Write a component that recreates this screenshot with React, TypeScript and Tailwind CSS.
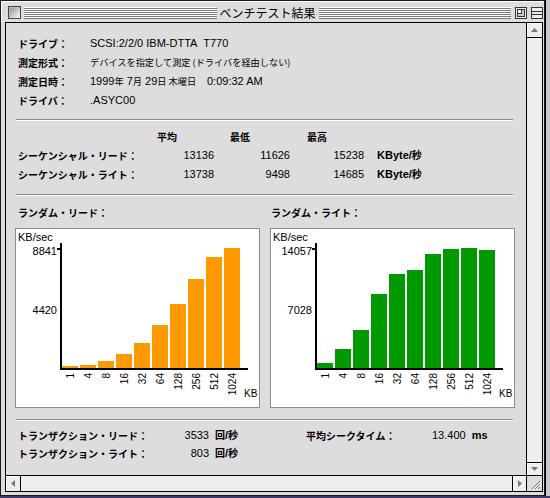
import React from "react";

const jp = "font-['Noto_Sans_CJK_JP',sans-serif]";
const num = "font-['Liberation_Sans','Noto_Sans_CJK_JP',sans-serif]";
const jpValue = "text-[9.2px] font-['Noto_Sans_CJK_JP',sans-serif]";

const sizes = ["1", "4", "8", "16", "32", "64", "128", "256", "512", "1024"];

interface ChartProps {
  color: string;
  heights: number[];
  max: string;
  mid: string;
}

const Chart: React.FC<ChartProps> = ({ color, heights, max, mid }) => (
  <div className="w-[245px] h-[180px] border border-[#8c8c8c] bg-white">
    <svg width={243} height={178} viewBox="1 1 243 178" fontFamily="Liberation Sans, sans-serif">
      <text x={3} y={13} fontSize={11}>
        KB/sec
      </text>
      {heights.map((h, i) => (
        <rect key={i} x={47 + 18 * i} y={140 - h} width={16} height={h} fill={color} />
      ))}
      <rect x={45} y={15} width={2} height={127} fill="#000" />
      <rect x={45} y={140} width={188} height={2} fill="#000" />
      <rect x={42} y={20} width={3} height={2} fill="#000" />
      <text x={42} y={27} fontSize={11} textAnchor="end">
        {max}
      </text>
      <text x={42} y={86} fontSize={11} textAnchor="end">
        {mid}
      </text>
      {sizes.map((s, i) => (
        <text
          key={s}
          transform={`translate(${55 + 18 * i} 145) rotate(-90)`}
          textAnchor="end"
          dy="0.36em"
          fontSize={10}
        >
          {s}
        </text>
      ))}
      <text x={229} y={169} fontSize={10}>
        KB
      </text>
    </svg>
  </div>
);

const Stripes = () => (
  <div className="flex-1 h-[12px] bg-[repeating-linear-gradient(to_bottom,#ffffff_0px,#ffffff_1px,#7a7a7a_1px,#7a7a7a_2px)]" />
);

const Separator = ({ className }: { className: string }) => (
  <div className={`ml-[10px] w-[497px] h-[2px] border-t border-[#8a8a8a] border-b border-b-white ${className}`} />
);

const Arrow = ({ dir }: { dir: "up" | "down" | "left" | "right" }) => {
  const pts = {
    up: "0,4 7,4 3.5,0",
    down: "0,0 7,0 3.5,4",
    left: "4,0 4,7 0,3.5",
    right: "0,0 0,7 4,3.5",
  }[dir];
  const vertical = dir === "up" || dir === "down";
  return (
    <svg width={vertical ? 7 : 4} height={vertical ? 4 : 7}>
      <polygon points={pts} fill="#777" />
    </svg>
  );
};

const InfoRow = ({ label, children }: { label: string; children: React.ReactNode }) => (
  <div className="flex items-center h-[19px] pl-[12px]">
    <span className={`w-[72px] text-[10px] font-bold ${jp}`}>{label}</span>
    <span className={`text-[11px] whitespace-nowrap ${num}`}>{children}</span>
  </div>
);

const SeqRow = ({ label, a, b, c }: { label: string; a: string; b: string; c: string }) => (
  <div className={`flex items-center h-[19px] pl-[12px] ${num} text-[11px]`}>
    <span className={`w-[120px] text-[10px] font-bold whitespace-nowrap ${jp}`}>{label}</span>
    <span className="w-[76px] text-right">{a}</span>
    <span className="w-[76px] text-right">{b}</span>
    <span className="w-[74px] text-right">{c}</span>
    <span className="ml-[13px] font-bold">
      KByte/<span className={`text-[10px] ${jp}`}>秒</span>
    </span>
  </div>
);

const PerSec = () => (
  <span className="ml-[6px] font-bold">
    <span className={`text-[10px] ${jp}`}>回</span>/<span className={`text-[10px] ${jp}`}>秒</span>
  </span>
);

export default function App() {
  return (
    <div className="w-[550px] h-[498px] bg-[#3c3c6e] overflow-hidden text-black">
      <div className="flex h-[496px]">
        <div className="w-[545px] h-[496px] border border-[#1a1a1a] bg-[#dddddd] flex flex-col">
          {/* title bar */}
          <div className="h-[21px] flex items-center pl-[6px] pr-[1px] pt-[1px] border-t border-l border-t-white border-l-white">
            <div className="w-[13px] h-[13px] border border-[#444] bg-gradient-to-br from-[#8c8c8c] to-[#ffffff] shadow-[inset_1px_1px_0_#bbb]" />
            <div className="ml-[3px] flex-1 flex items-center">
              <Stripes />
              <span className={`px-[3px] text-[12px] leading-[14px] ${jp}`}>ベンチテスト結果</span>
              <Stripes />
            </div>
            <svg className="ml-[4px]" width={12} height={12}>
              <rect x={0.5} y={0.5} width={11} height={11} fill="#eee" stroke="#333" />
              <rect x={2.5} y={2.5} width={7} height={7} fill="#ccc" stroke="#333" />
              <rect x={2.5} y={2.5} width={4} height={4} fill="#fff" stroke="#333" />
            </svg>
            <svg className="ml-[4px]" width={12} height={12}>
              <rect x={0.5} y={0.5} width={11} height={11} fill="#eee" stroke="#333" />
              <line x1={1} y1={4.5} x2={11} y2={4.5} stroke="#333" />
              <line x1={1} y1={7.5} x2={11} y2={7.5} stroke="#333" />
            </svg>
          </div>

          {/* body */}
          <div className="flex-1 pl-[4px] pr-[1px] pb-[3px] flex">
            <div className="flex-1 border border-black flex flex-col">
              <div className="h-[452px] flex">
                <div className="w-[520px] bg-[#dddddd] flex flex-col">
                  <div className="mt-[11px]">
                    <InfoRow label="ドライブ：">SCSI:2/2/0 IBM-DTTA&nbsp; T770</InfoRow>
                    <InfoRow label="測定形式：">
                      <span className={jpValue}>デバイスを指定して測定 (ドライバを経由しない)</span>
                    </InfoRow>
                    <InfoRow label="測定日時：">
                      <span className="inline-block w-[117px]">
                        1999<span className={jpValue}>年</span> 7<span className={jpValue}>月</span> 29
                        <span className={jpValue}>日 木曜日</span>
                      </span>
                      <span>0:09:32 AM</span>
                    </InfoRow>
                    <InfoRow label="ドライバ：">.ASYC00</InfoRow>
                  </div>

                  <Separator className="mt-[9px]" />

                  <div className={`mt-[5px] h-[20px] flex items-center pl-[151px] text-[10px] font-bold ${jp}`}>
                    <span className="w-[73px]">平均</span>
                    <span className="w-[77px]">最低</span>
                    <span>最高</span>
                  </div>
                  <SeqRow label="シーケンシャル・リード：" a="13136" b="11626" c="15238" />
                  <SeqRow label="シーケンシャル・ライト：" a="13738" b="9498" c="14685" />

                  <Separator className="mt-[10px]" />

                  <div className={`mt-[7px] h-[19px] flex items-center pl-[12px] text-[10px] font-bold ${jp}`}>
                    <span className="w-[253px]">ランダム・リード：</span>
                    <span>ランダム・ライト：</span>
                  </div>

                  <div className="mt-[6px] ml-[9px] flex gap-[10px]">
                    <Chart
                      color="#ff9900"
                      heights={[2, 3, 7, 14, 25, 43, 64, 89, 111, 120]}
                      max="8841"
                      mid="4420"
                    />
                    <Chart
                      color="#009900"
                      heights={[5, 19, 38, 74, 94, 98, 114, 119, 120, 118]}
                      max="14057"
                      mid="7028"
                    />
                  </div>

                  <Separator className="mt-[11px]" />

                  <div className={`mt-[5px] pl-[12px] text-[11px] ${num}`}>
                    <div className="flex items-center h-[18px]">
                      <div className="w-[288px] flex items-center">
                        <span className={`w-[150px] text-[10px] font-bold whitespace-nowrap ${jp}`}>トランザクション・リード：</span>
                        <span className="w-[41px] text-right">3533</span>
                        <PerSec />
                      </div>
                      <span className={`w-[126px] text-[10px] font-bold whitespace-nowrap ${jp}`}>平均シークタイム：</span>
                      <span>13.400</span>
                      <span className="ml-[6px] font-bold">ms</span>
                    </div>
                    <div className="flex items-center h-[18px]">
                      <span className={`w-[150px] text-[10px] font-bold whitespace-nowrap ${jp}`}>トランザクション・ライト：</span>
                      <span className="w-[41px] text-right">803</span>
                      <PerSec />
                    </div>
                  </div>
                </div>

                {/* vertical scrollbar */}
                <div className="w-[16px] border-l border-black bg-[#eeeeee] flex flex-col">
                  <div className="h-[15px] border-b border-black flex items-center justify-center shadow-[inset_1px_1px_0_#fff]">
                    <Arrow dir="up" />
                  </div>
                  <div className="flex-1" />
                  <div className="h-[13px] border-t border-black flex items-center justify-center shadow-[inset_1px_1px_0_#fff]">
                    <Arrow dir="down" />
                  </div>
                </div>
              </div>

              {/* horizontal scrollbar */}
              <div className="h-[16px] border-t border-black flex">
                <div className="w-[520px] bg-[#eeeeee] flex">
                  <div className="w-[15px] border-r border-black flex items-center justify-center shadow-[inset_1px_1px_0_#fff]">
                    <Arrow dir="left" />
                  </div>
                  <div className="flex-1" />
                  <div className="w-[14px] border-l border-black flex items-center justify-center shadow-[inset_1px_1px_0_#fff]">
                    <Arrow dir="right" />
                  </div>
                </div>
                <div className="w-[16px] border-l border-black bg-[#dddddd] flex items-center justify-center">
                  <svg width={12} height={12}>
                    <line x1={3} y1={11} x2={11} y2={3} stroke="#777" />
                    <line x1={4} y1={12} x2={12} y2={4} stroke="#fff" />
                    <line x1={6} y1={11} x2={11} y2={6} stroke="#777" />
                    <line x1={7} y1={12} x2={12} y2={7} stroke="#fff" />
                    <line x1={9} y1={11} x2={11} y2={9} stroke="#777" />
                  </svg>
                </div>
              </div>
            </div>
          </div>
        </div>
        <div className="flex-1 bg-[#c8c8d0] border-l border-black" />
      </div>
    </div>
  );
}
